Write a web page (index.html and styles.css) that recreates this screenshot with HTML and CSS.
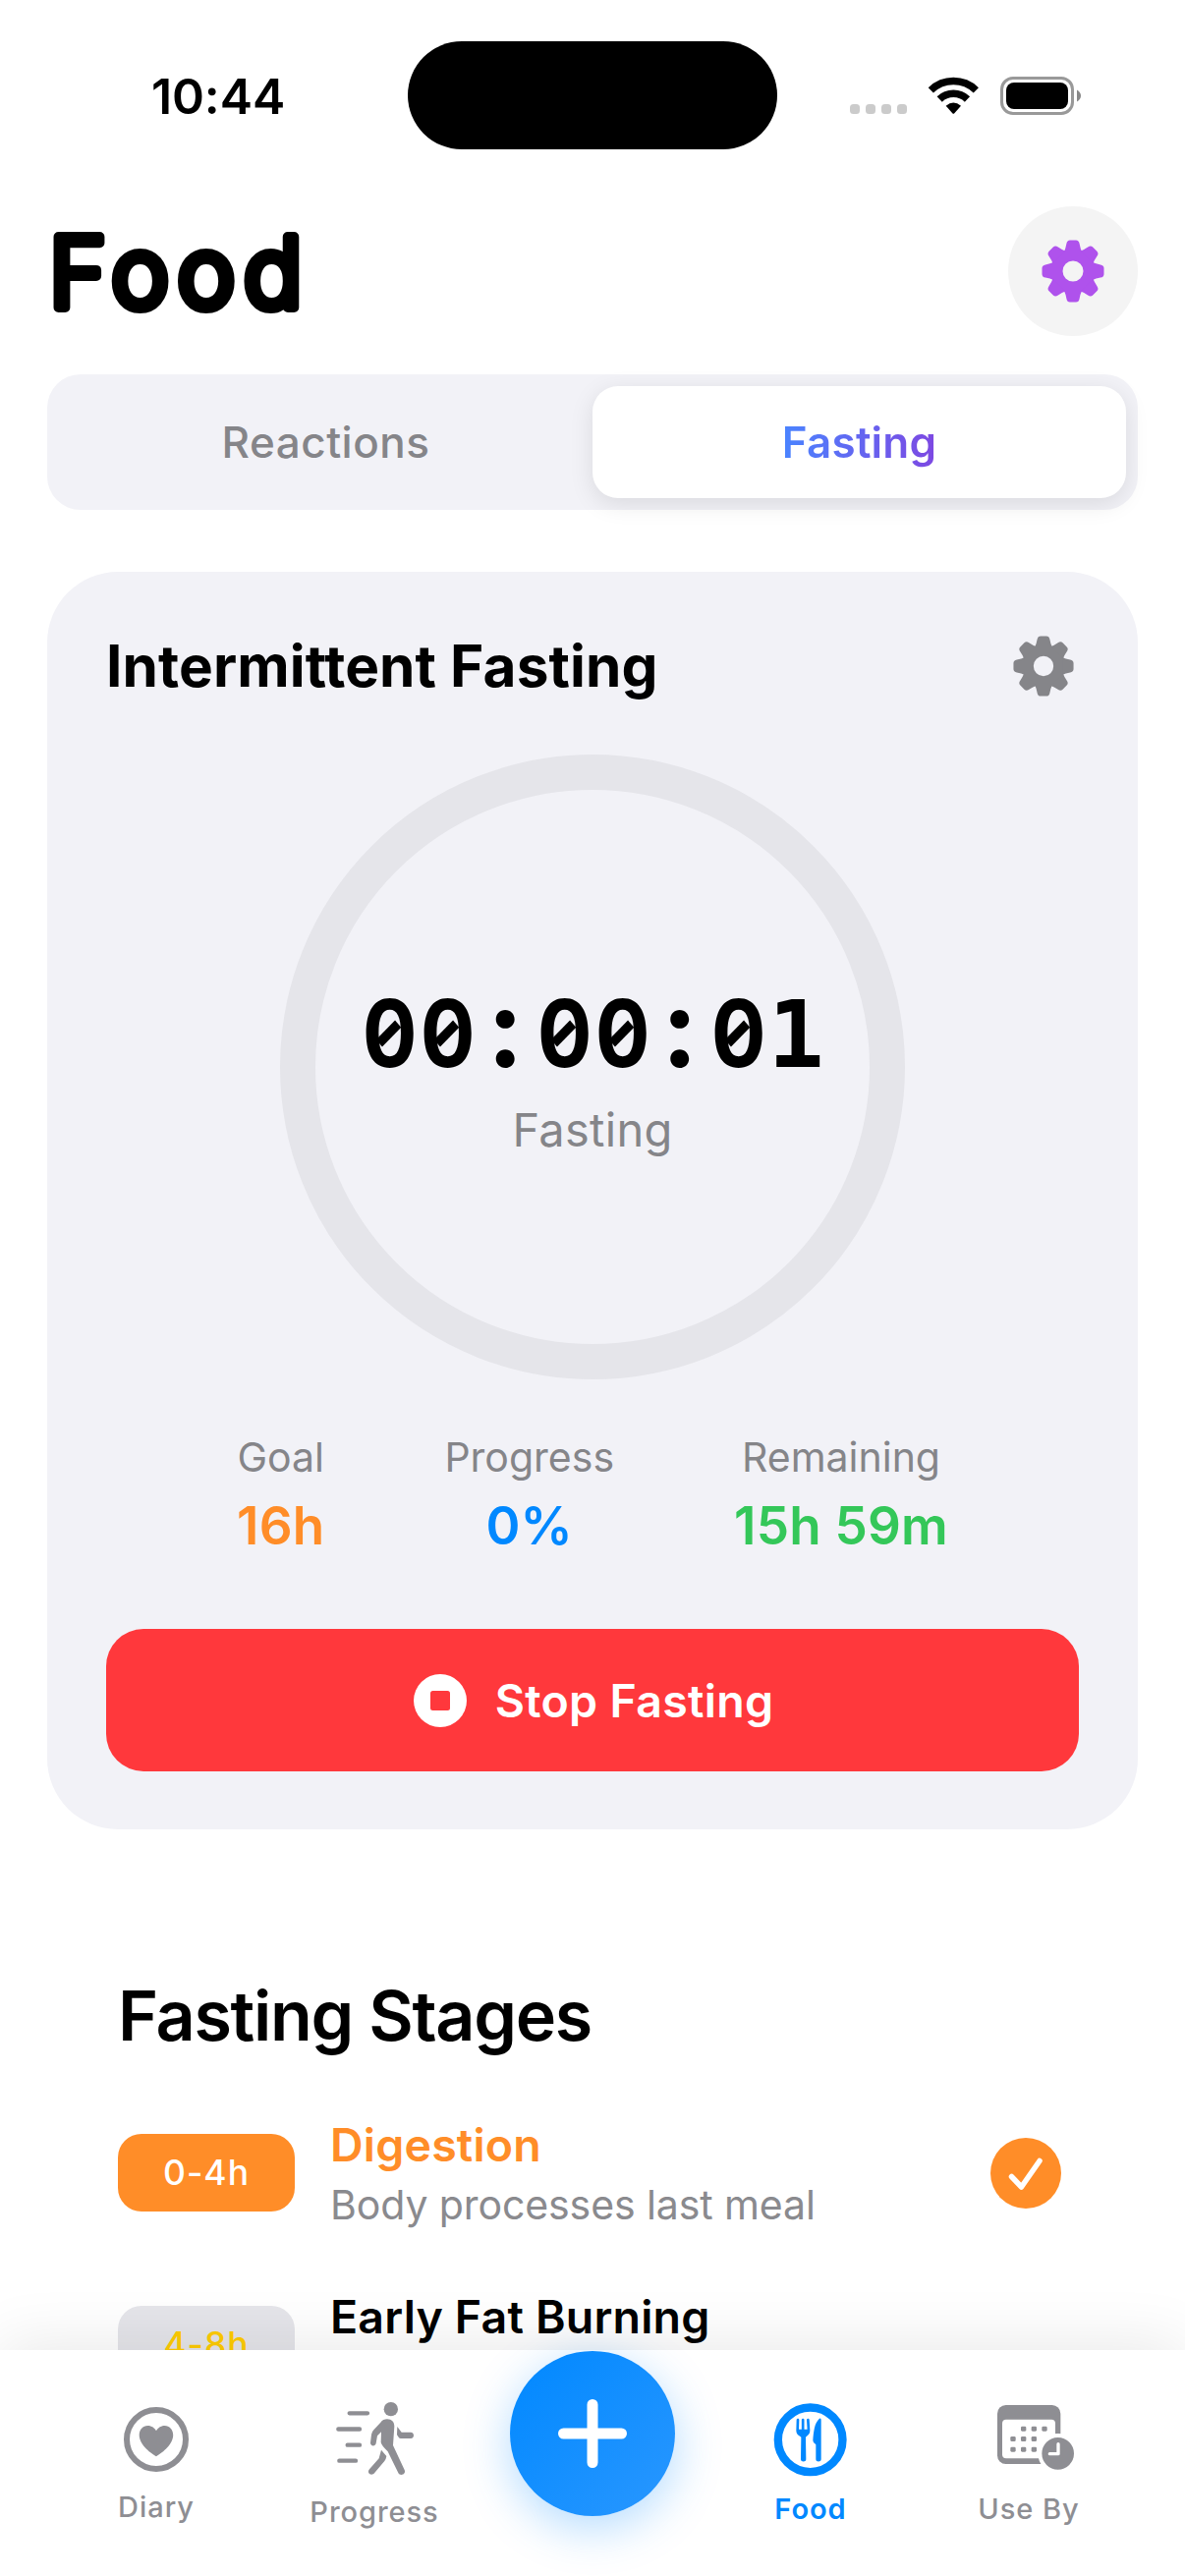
FILE: index.html
```html
<!DOCTYPE html>
<html lang="en">
<head>
<meta charset="utf-8">
<title>Food – Fasting</title>
<link rel="stylesheet" href="styles.css">
</head>
<body>
<svg class="defs" width="0" height="0" aria-hidden="true">
  <defs>
    <path id="tooth" d="M-9 -20Q-7.500 -23 -6.6 -28Q-6 -31.5 -3 -31.5H3Q6 -31.5 6.6 -28Q7.500 -23 9 -20Z"/>
    <g id="gear">
      <circle r="16.500" fill="none" stroke="currentColor" stroke-width="12"/>
      <g fill="currentColor">
        <use href="#tooth"/>
        <use href="#tooth" transform="rotate(45)"/>
        <use href="#tooth" transform="rotate(90)"/>
        <use href="#tooth" transform="rotate(135)"/>
        <use href="#tooth" transform="rotate(180)"/>
        <use href="#tooth" transform="rotate(225)"/>
        <use href="#tooth" transform="rotate(270)"/>
        <use href="#tooth" transform="rotate(315)"/>
      </g>
    </g>
  </defs>
</svg>
<div class="screen">
  <div class="status">
    <div class="status-time">10:44</div>
    <div class="island"></div>
    <div class="status-icons">
      <svg width="58" height="40" viewBox="0 0 58 40" fill="#cbcbcb">
        <rect x="0" y="28" width="10" height="10" rx="3.5"/><rect x="16" y="28" width="10" height="10" rx="3.5"/><rect x="32" y="28" width="10" height="10" rx="3.5"/><rect x="48" y="28" width="10" height="10" rx="3.5"/>
      </svg>
      <svg width="51" height="40" viewBox="315 84 153 120">
        <g fill="none" stroke="#000" stroke-width="22.5">
          <path d="M322 125.5A99.5 99.5 0 0 1 460 125.5"/>
          <path d="M348.600 153A61 61 0 0 1 433.400 153"/>
        </g>
        <path d="M368 173Q391 154 414 173L394 196Q391 199 388 196Z"/>
      </svg>
      <svg width="83" height="40" viewBox="0 0 83 40">
        <rect x="1.500" y="1.500" width="72" height="36" rx="11.500" fill="none" stroke="#999" stroke-width="3"/>
        <rect x="6" y="6" width="63" height="27" rx="8"/>
        <path d="M78 13.500Q82 16 82 19.500T78 25.500Z" fill="#888"/>
      </svg>
    </div>
  </div>

  <header class="header">
    <svg class="title" width="300" height="132" viewBox="0 0 300 132" role="heading">
      <text class="title-text" x="2" y="102.500">Food</text>
    </svg>
    <div class="settings">
      <svg width="66" height="66" viewBox="-33 -33 66 66"><use href="#gear"/></svg>
    </div>
  </header>

  <div class="segments">
    <div class="segment">Reactions</div>
    <div class="segment segment-on"><span>Fasting</span></div>
  </div>

  <section class="card">
    <div class="card-head">
      <h2>Intermittent Fasting</h2>
      <svg width="64" height="64" viewBox="-33 -33 66 66"><use href="#gear"/></svg>
    </div>
    <div class="ring">
      <div class="timer"><span class="zero">0</span><span class="zero">0</span><span class="sep">:</span><span class="zero">0</span><span class="zero">0</span><span class="sep">:</span><span class="zero">0</span><span class="one">1</span></div>
      <div class="ring-label">Fasting</div>
    </div>
    <div class="stats">
      <div class="stat"><span>Goal</span><b class="orange">16h</b></div>
      <div class="stat"><span>Progress</span><b class="blue">0%</b></div>
      <div class="stat"><span>Remaining</span><b class="green">15h 59m</b></div>
    </div>
    <div class="stop">
      <svg width="54" height="54" viewBox="0 0 54 54"><circle cx="27" cy="27" r="27" fill="#fff"/><rect x="17" y="17" width="20" height="20" rx="2.500" fill="#ff383c"/></svg>
      <span>Stop Fasting</span>
    </div>
  </section>

  <section class="stages">
    <h2>Fasting Stages</h2>
    <div class="stage">
      <div class="pill pill-now">0-4h</div>
      <div class="stage-text"><div class="name orange">Digestion</div><div class="desc">Body processes last meal</div></div>
      <svg width="72" height="72" viewBox="0 0 72 72"><circle cx="36" cy="36" r="36" fill="#ff8d28"/><path d="M21.500 39.500L31.500 50L50 23.500" fill="none" stroke="#fff" stroke-width="5.500" stroke-linecap="round" stroke-linejoin="round"/></svg>
    </div>
    <div class="stage">
      <div class="pill">4-8h</div>
      <div class="stage-text"><div class="name">Early Fat Burning</div></div>
    </div>
  </section>

  <nav class="tabs">
    <div class="tab">
      <svg width="100" height="94" viewBox="109 2440 100 94">
        <circle cx="159" cy="2483" r="30" fill="none" stroke="currentColor" stroke-width="6"/>
        <path fill="currentColor" d="M159 2500.200C155 2498 141.700 2489 141.700 2478.500C141.700 2473 145.500 2469 150.300 2469C154.500 2469 157.500 2471.500 159 2474.300C160.500 2471.500 163.500 2469 167.600 2469C172.400 2469 176.200 2473 176.200 2478.500C176.200 2489 163 2498 159 2500.200Z"/>
      </svg>
      <span>Diary</span>
    </div>
    <div class="tab">
      <svg width="100" height="99" viewBox="331 2440 100 99">
        <g transform="translate(100 2420) scale(.33333)" fill="currentColor">
          <path d="M767 109H822M733 157.500H798M761 206H798M736 254H786" fill="none" stroke="currentColor" stroke-width="13" stroke-linecap="round"/>
          <circle cx="893.500" cy="96.500" r="21.500"/>
          <path d="M882 127C896 127 904 136 904 149L900 207L935 282C941 295 922 303 916 291L884 226Q864 206 863 198L864 166L852 178L848 201C846 212 830 210 831 199L834 174Q835 166 841 160L862 137Q870 127 882 127Z"/>
          <path d="M864 221L880 240Q879 248 874 255L843 292C834 303 818 291 828 280L857 247Z"/>
          <path d="M913 150L926 167H954C966 167 966 186 954 186H924Q919 186 917 182L912 175Z"/>
        </g>
      </svg>
      <span>Progress</span>
    </div>
    <div class="tab-add">
      <div class="fab">
        <svg width="72" height="72" viewBox="0 0 72 72"><path d="M36 6.500V65.500M6.500 36H65.500" stroke="#fff" stroke-width="11" stroke-linecap="round"/></svg>
      </div>
    </div>
    <div class="tab tab-on">
      <svg width="100" height="96" viewBox="775 2440 100 96">
        <g transform="translate(740 2420) scale(.33333)" fill="currentColor">
          <circle cx="254" cy="190" r="98.500" fill="none" stroke="currentColor" stroke-width="25"/>
          <path d="M216 129L215 162Q215 173 226 175H238Q249 173 249 162L247 129M231.500 129V170" fill="none" stroke="currentColor" stroke-width="8" stroke-linecap="round"/>
          <path d="M213 158H251Q252 172 240 182L241 250C241 259 225 259 225 250L226 182Q212 172 213 158Z"/>
          <path d="M282 125Q287 122 287 130V250C287 259 271 259 271 250V205Q262 200 262 192C264 168 266 138 282 125Z"/>
        </g>
      </svg>
      <span>Food</span>
    </div>
    <div class="tab">
      <svg width="100" height="96" viewBox="997 2440 100 96">
        <g transform="translate(740 2420) scale(.33333)">
          <rect x="825" y="84" width="193" height="180" rx="26" fill="currentColor"/>
          <rect x="840" y="128" width="162" height="119" rx="12" fill="#fff"/>
          <g fill="currentColor">
            <rect x="897" y="149" width="16" height="15" rx="4"/><rect x="929" y="149" width="16" height="15" rx="4"/><rect x="961" y="149" width="16" height="15" rx="4"/>
            <rect x="865" y="180" width="16" height="15" rx="4"/><rect x="897" y="180" width="16" height="15" rx="4"/><rect x="929" y="180" width="16" height="15" rx="4"/>
            <rect x="865" y="212" width="16" height="15" rx="4"/><rect x="897" y="212" width="16" height="15" rx="4"/><rect x="929" y="212" width="16" height="15" rx="4"/>
          </g>
          <circle cx="1010" cy="232" r="55" fill="currentColor" stroke="#fff" stroke-width="12"/>
          <path d="M1011 203V233H985" fill="none" stroke="#fff" stroke-width="10" stroke-linecap="round" stroke-linejoin="round"/>
        </g>
      </svg>
      <span>Use By</span>
    </div>
  </nav>
</div>
</body>
</html>
```
FILE: styles.css
```css
* { box-sizing: border-box; margin: 0; padding: 0; }
body { background: #fff; color: #000; font-family: Inter, "Liberation Sans", sans-serif; font-feature-settings: "calt" 0, "liga" 0; }
svg { display: block; flex: none; overflow: visible; }
.defs { position: absolute; }
.screen { position: relative; width: 1206px; height: 2622px; overflow: hidden; }

.status { display: grid; grid-template-columns: 415px 376px 415px; align-items: center; height: 194px; }
.status-time { padding-left: 29px; text-align: center; font-size: 50px; font-weight: 600; line-height: 60px; letter-spacing: -.1px; margin-top: 2px; }
.island { height: 110px; border-radius: 55px; background: #000; }
.status-icons { display: flex; gap: 22px; padding-left: 74px; margin-top: 2px; }

.header { display: flex; justify-content: space-between; align-items: center; height: 132px; margin: 16px 48px 0; }
.title-text { font-size: 99px; font-weight: 300; letter-spacing: 8.800px; fill: #000; stroke: #000; stroke-width: 10px; stroke-linejoin: round; }
.settings { display: flex; align-items: center; justify-content: center; width: 132px; height: 132px; border-radius: 50%; background: #f4f4f4; color: #af52ec; }

.segments { display: grid; grid-template-columns: 1fr 1fr; height: 138px; margin: 39px 48px 0; padding: 12px; border-radius: 34px; background: #f2f2f7; }
.segment { display: flex; align-items: center; justify-content: center; border-radius: 26px; font-size: 44px; font-weight: 500; letter-spacing: .5px; color: #858589; }
.segment-on { background: #fff; box-shadow: 0 6px 24px rgba(0, 0, 0, .1); font-weight: 600; letter-spacing: .2px; }
.segment-on span { background: linear-gradient(90deg, #4a84ff, #7d48e2); background-clip: text; -webkit-background-clip: text; color: transparent; }

.card { height: 1280px; margin: 63px 48px 0; padding: 60px; border-radius: 72px; background: #f2f2f7; }
.card-head { display: flex; align-items: center; justify-content: space-between; height: 72px; padding-right: 4px; color: #858589; }
.card-head h2 { color: #000; font-size: 58.500px; font-weight: 700; letter-spacing: .1px; line-height: 72px; }
.ring { display: flex; flex-direction: column; align-items: center; justify-content: center; width: 636px; height: 636px; margin: 54px auto 0; border: 36px solid #e5e5ea; border-radius: 50%; }
.timer { display: flex; align-items: baseline; height: 114px; margin-top: -6px; margin-bottom: 6px; font-size: 95px; font-weight: 700; line-height: 114px; }
.timer span { position: relative; width: 59.200px; text-align: center; }
.zero { transform: scaleX(.91); font-feature-settings: "tnum"; }
.zero::after { content: ""; position: absolute; left: 15px; top: 52px; width: 29px; height: 10px; background: #000; transform: rotate(-43deg); }
.sep { font-size: 112px; }
.timer .one { font-family: "DejaVu Sans Mono", monospace; font-size: 95px; }
.ring-label { margin: 11px 0 -3px; font-size: 47px; line-height: 62px; letter-spacing: .3px; color: #858589; }
.stats { display: flex; justify-content: center; gap: 122px; margin-top: 52px; }
.stat { display: flex; flex-direction: column; align-items: center; gap: 11px; }
.stat span { font-size: 41px; line-height: 55px; letter-spacing: 0; color: #858589; }
.stat b { font-size: 53px; font-weight: 600; line-height: 62px; letter-spacing: .2px; }
.orange { color: #ff8d28; }
.blue { color: #08f; }
.green { color: #34c759; }
.stop { display: flex; align-items: center; justify-content: center; gap: 29px; height: 145px; margin-top: 74px; padding-left: 2px; border-radius: 38px; background: #ff383c; color: #fff; font-size: 46.500px; font-weight: 600; letter-spacing: .3px; }

.stages { padding: 148px 126px 0 120px; }
.stages h2 { font-size: 70px; font-weight: 600; line-height: 84px; letter-spacing: -1.300px; }
.stage { display: flex; align-items: center; height: 114px; margin-top: 61px; }
.pill { width: 180px; height: 79px; margin: 0 36px 1px 0; border-radius: 24px; background: #e5e5ea; color: #fc0; font-size: 35.500px; font-weight: 500; line-height: 80px; letter-spacing: 1px; text-align: center; }
.pill-now { background: #ff8d28; color: #fff; }
.stage-text { display: flex; flex-direction: column; gap: 8px; flex: 1; align-self: flex-start; }
.name { font-size: 46.500px; font-weight: 600; line-height: 56px; letter-spacing: .2px; }
.desc { font-size: 41px; line-height: 50px; letter-spacing: -.1px; color: #8a8a8e; }

.tabs { position: absolute; left: 0; right: 0; bottom: 0; display: grid; grid-template-columns: repeat(5, 1fr); height: 230px; padding: 0 48px; background: #fff; box-shadow: 0 -6px 60px rgba(0, 0, 0, .09); }
.tab { display: flex; flex-direction: column; align-items: center; padding-top: 48px; color: #8e8e93; font-size: 29px; font-weight: 500; line-height: 36px; letter-spacing: .95px; }
.tab-on { color: #08f; font-weight: 600; }
.tab-add { display: flex; justify-content: center; padding-top: 1px; }
.fab { display: flex; align-items: center; justify-content: center; width: 168px; height: 168px; border-radius: 50%; background: linear-gradient(135deg, #08f, #2997ff); box-shadow: 0 12px 48px rgba(0, 136, 255, .3); }
```
